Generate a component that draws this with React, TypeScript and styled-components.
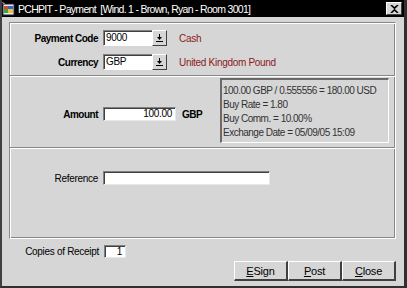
import React from "react";
import styled, { createGlobalStyle } from "styled-components";

const Global = createGlobalStyle`
  html, body { margin: 0; padding: 0; background: #d6d6d6; }
  * { box-sizing: border-box; }
`;

const Window = styled.div`
  width: 407px;
  height: 288px;
  background: #d6d6d6;
  border-left: 2px solid #404040;
  border-right: 3px solid #303030;
  border-bottom: 2px solid #303030;
  display: flex;
  flex-direction: column;
  font-family: "Liberation Sans", Arial, sans-serif;
  font-size: 10px;
  letter-spacing: -0.3px;
  color: #000;
  overflow: hidden;
`;

const TitleBar = styled.div`
  height: 17px;
  background: #000;
  color: #fff;
  display: flex;
  align-items: center;
  margin-left: -2px;
  margin-right: -3px;
  font-size: 10.5px;
  letter-spacing: -0.7px;
  white-space: pre;
`;

const TitleText = styled.span`
  flex: 1;
  margin-left: 3px;
`;

const CloseBox = styled.div`
  width: 16px;
  height: 13px;
  background: #d6d6d6;
  border-top: 1px solid #fff;
  border-left: 1px solid #fff;
  border-right: 1px solid #404040;
  border-bottom: 1px solid #404040;
  display: flex;
  align-items: center;
  justify-content: center;
  margin-right: 5px;
`;

const Group = styled.div`
  margin: 5px 8px 0 7px;
  height: 217px;
  border-top: 1px solid #888;
  border-left: 1px solid #888;
  border-right: 1px solid #fff;
  border-bottom: 1px solid #fff;
  box-shadow: inset 1px 1px 0 #fff, inset -1px -1px 0 #888;
  display: flex;
  flex-direction: column;
`;

const Section = styled.div<{ $h: number; $last?: boolean }>`
  height: ${(p) => p.$h}px;
  border-bottom: ${(p) => (p.$last ? "none" : "1px solid #888")};
  box-shadow: ${(p) => (p.$last ? "none" : "0 1px 0 #fff")};
  display: flex;
  flex-direction: column;
`;

const Row = styled.div<{ $top: number }>`
  display: grid;
  grid-template-columns: 88px auto auto;
  justify-content: start;
  column-gap: 5px;
  align-items: center;
  margin-top: ${(p) => p.$top}px;
`;

const Label = styled.span<{ $bold?: boolean }>`
  text-align: right;
  white-space: nowrap;
  font-weight: ${(p) => (p.$bold ? "bold" : "normal")};
  letter-spacing: ${(p) => (p.$bold ? "-0.5px" : "-0.3px")};
`;

const Combo = styled.div`
  display: flex;
  width: 64px;
  height: 16px;
`;

const ComboInput = styled.div`
  flex: 1;
  background: #fff;
  border-top: 1px solid #808080;
  border-left: 1px solid #808080;
  border-bottom: 1px solid #fff;
  padding-left: 2px;
  line-height: 13px;
  box-shadow: inset 1px 1px 0 #404040;
`;

const ComboButton = styled.div`
  width: 15px;
  background: #d6d6d6;
  border-top: 1px solid #fff;
  border-left: 1px solid #fff;
  border-right: 1px solid #404040;
  border-bottom: 1px solid #404040;
  display: flex;
  align-items: center;
  justify-content: center;
`;

const RedText = styled.span`
  color: #8b1a1a;
  margin-left: 7px;
  white-space: nowrap;
`;

const TextBox = styled.div<{ $w: number; $align?: string }>`
  width: ${(p) => p.$w}px;
  height: 14px;
  background: #fff;
  border-top: 1px solid #808080;
  border-left: 1px solid #808080;
  border-right: 1px solid #e8e8e8;
  border-bottom: 1px solid #e8e8e8;
  box-shadow: inset 1px 1px 0 #404040;
  text-align: ${(p) => p.$align || "left"};
  padding: 0 3px;
  line-height: 12px;
`;

const MiddleSection = styled(Section)`
  flex-direction: row;
  align-items: flex-start;
`;

const AmountRow = styled.div`
  display: grid;
  grid-template-columns: 88px 73px auto;
  justify-content: start;
  column-gap: 5px;
  align-items: center;
  margin-top: 31px;
  width: 210px;
  flex: none;
`;

const GbpLabel = styled(Label)`
  margin-left: 1px;
`;

const InfoBox = styled.div`
  margin-top: 2px;
  width: 169px;
  height: 65px;
  border-top: 2px solid #6a6a6a;
  border-left: 2px solid #6a6a6a;
  border-right: 1px solid #fff;
  border-bottom: 1px solid #fff;
  padding: 4px 0 0 1px;
  color: #333;
  display: flex;
  flex-direction: column;
  line-height: 14px;
  letter-spacing: -0.5px;
  white-space: nowrap;
`;

const Footer = styled.div`
  display: flex;
  flex-direction: column;
`;

const CopiesRow = styled.div`
  display: grid;
  grid-template-columns: 88px auto;
  justify-content: start;
  column-gap: 5px;
  align-items: center;
  margin: 6px 0 0 9px;
`;

const SmallBox = styled(TextBox)`
  height: 13px;
`;

const Buttons = styled.div`
  display: flex;
  justify-content: flex-end;
  margin-top: 3px;
  margin-right: 8px;
`;

const Btn = styled.div`
  width: 54px;
  height: 20px;
  background: #d6d6d6;
  border-top: 1px solid #fff;
  border-left: 1px solid #fff;
  border-right: 2px solid #404040;
  border-bottom: 2px solid #404040;
  display: flex;
  align-items: center;
  justify-content: center;
  font-size: 11px;
  letter-spacing: -0.2px;
`;

const U = styled.span`
  text-decoration: underline;
`;

const DownArrow = () => (
  <svg width="9" height="9" viewBox="0 0 9 9">
    <path d="M4 0h1v3h2L4.5 6 2 3h2z" fill="#000" />
    <rect x="1" y="7" width="7" height="1" fill="#000" />
  </svg>
);

const AppIcon = () => (
  <svg width="15" height="15" viewBox="0 0 15 15">
    <rect x="3" y="3" width="11" height="11" fill="#e8e8f8" stroke="#223" strokeWidth="1" />
    <rect x="4" y="5" width="4" height="3" fill="#d43" />
    <rect x="8" y="5" width="5" height="3" fill="#36c" />
    <rect x="4" y="8" width="4" height="4" fill="#3a3" />
    <rect x="8" y="8" width="5" height="4" fill="#e9c23a" />
    <path d="M1 1l4 1-1 1z" fill="#ccc" />
  </svg>
);

const CloseX = () => (
  <svg width="9" height="8" viewBox="0 0 9 8">
    <path d="M1 0l3.5 3.2L8 0M1 8l3.5-3.2L8 8" stroke="#000" strokeWidth="1.6" fill="none" />
  </svg>
);

export default function App() {
  return (
    <>
      <Global />
      <Window>
        <TitleBar>
          <AppIcon />
          <TitleText>PCHPIT - Payment  [Wind. 1 - Brown, Ryan - Room 3001]</TitleText>
          <CloseBox>
            <CloseX />
          </CloseBox>
        </TitleBar>
        <Group>
          <Section $h={53}>
            <Row $top={7}>
              <Label $bold>Payment Code</Label>
              <Combo>
                <ComboInput>9000</ComboInput>
                <ComboButton>
                  <DownArrow />
                </ComboButton>
              </Combo>
              <RedText>Cash</RedText>
            </Row>
            <Row $top={8}>
              <Label $bold>Currency</Label>
              <Combo>
                <ComboInput>GBP</ComboInput>
                <ComboButton>
                  <DownArrow />
                </ComboButton>
              </Combo>
              <RedText>United Kingdom Pound</RedText>
            </Row>
          </Section>
          <MiddleSection $h={72}>
            <AmountRow>
              <Label $bold>Amount</Label>
              <TextBox $w={73} $align="right">100.00</TextBox>
              <GbpLabel $bold>GBP</GbpLabel>
            </AmountRow>
            <InfoBox>
              <span>100.00 GBP / 0.555556 = 180.00 USD</span>
              <span>Buy Rate = 1.80</span>
              <span>Buy Comm. = 10.00%</span>
              <span>Exchange Date = 05/09/05 15:09</span>
            </InfoBox>
          </MiddleSection>
          <Section $h={90} $last>
            <Row $top={23}>
              <Label>Reference</Label>
              <TextBox $w={167} />
            </Row>
          </Section>
        </Group>
        <Footer>
          <CopiesRow>
            <Label>Copies of Receipt</Label>
            <SmallBox $w={22} $align="right">1</SmallBox>
          </CopiesRow>
          <Buttons>
            <Btn>
              <span><U>E</U>Sign</span>
            </Btn>
            <Btn>
              <span><U>P</U>ost</span>
            </Btn>
            <Btn>
              <span><U>C</U>lose</span>
            </Btn>
          </Buttons>
        </Footer>
      </Window>
    </>
  );
}
